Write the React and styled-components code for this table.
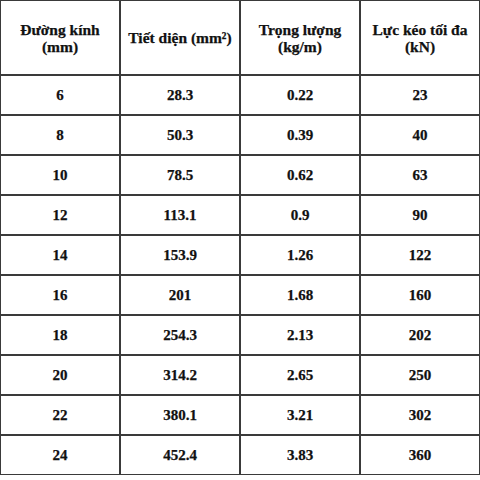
import React from "react";
import styled, { createGlobalStyle } from "styled-components";

const GlobalStyle = createGlobalStyle`
  html, body {
    margin: 0;
    padding: 0;
    background: #ffffff;
  }
`;

const headers = [
  ["Đường kính", "(mm)"],
  ["Tiết diện (mm²)"],
  ["Trọng lượng", "(kg/m)"],
  ["Lực kéo tối đa", "(kN)"],
];

const rows = [
  ["6", "28.3", "0.22", "23"],
  ["8", "50.3", "0.39", "40"],
  ["10", "78.5", "0.62", "63"],
  ["12", "113.1", "0.9", "90"],
  ["14", "153.9", "1.26", "122"],
  ["16", "201", "1.68", "160"],
  ["18", "254.3", "2.13", "202"],
  ["20", "314.2", "2.65", "250"],
  ["22", "380.1", "3.21", "302"],
  ["24", "452.4", "3.83", "360"],
];

const App = () => {
  return (
    <>
      <GlobalStyle />
      <Table>
        {headers.map((lines, i) => (
          <HeadCell key={"h" + i}>
            {lines.map((line) => (
              <span key={line}>{line}</span>
            ))}
          </HeadCell>
        ))}
        {rows.map((row, r) =>
          row.map((value, c) => <Cell key={r + "-" + c}>{value}</Cell>)
        )}
      </Table>
    </>
  );
};

const Table = styled.div`
  display: grid;
  grid-template-columns: repeat(4, 118px);
  grid-template-rows: 73px repeat(10, 38px);
  gap: 2px;
  padding: 1px;
  width: fit-content;
  background: #3a3a3a;
  font-family: "Liberation Serif", "Times New Roman", serif;
  font-weight: bold;
  color: #111111;
  -webkit-text-stroke: 0.25px #111111;
`;

const Cell = styled.div`
  background: #ffffff;
  display: flex;
  align-items: center;
  justify-content: center;
  font-size: 15px;
`;

const HeadCell = styled(Cell)`
  flex-direction: column;
  font-size: 15.5px;
  line-height: 17px;
  text-align: center;
`;

export default App;
